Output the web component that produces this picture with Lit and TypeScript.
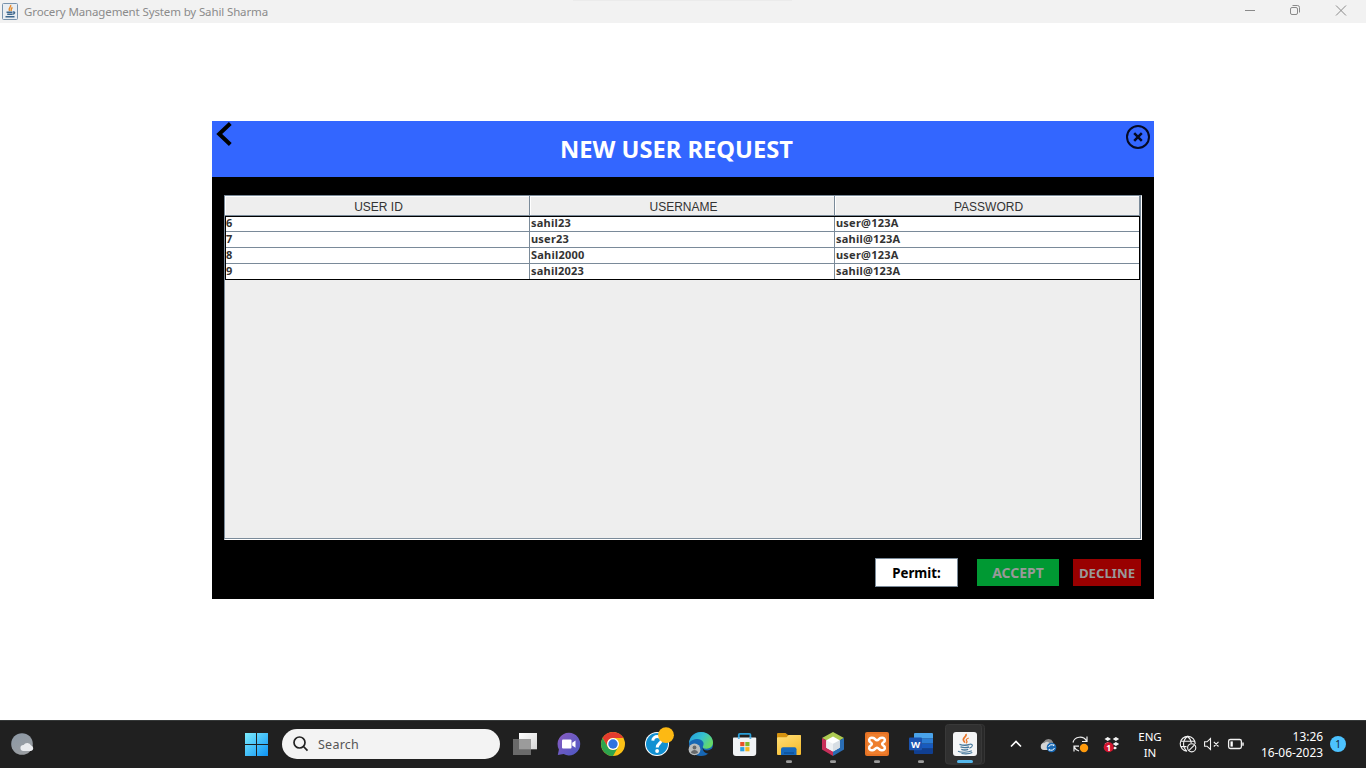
import { LitElement, html, css, svg } from "lit";
import { customElement } from "lit/decorators.js";

const javaCup = svg`
  <path d="M22.800 14c1.800 2.200-4 4-2.200 6.600l1.300 2" fill="none" stroke="#e8762b" stroke-width="1.700"/>
  <path d="M25.800 18c-3.200 1-2.800 2.200-2 3.200.5.8 0 1.500-.8 2" fill="none" stroke="#e8762b" stroke-width="1.300"/>
  <path d="M16.500 24.300c2.800 1 8 .9 10.300.1M17.500 26.900c2.200.8 6.300.8 8.500.1M18.300 29.400c1.800.6 5 .6 6.900 0" fill="none" stroke="#47799c" stroke-width="1.400"/>
  <path d="M26.800 24.200c3.600-.6 3.400 2.800-.3 3.900M15 31.200c2.500 1.400 10.500 1.400 13.800-.4M18.500 33.500c3.500.5 8.500.2 10.800-.9" fill="none" stroke="#47799c" stroke-width="1.100"/>`;

const running = svg`<rect x="19" y="40.300" width="6" height="2.700" rx="1.300" fill="#9c9c9c"/>`;

const apps = [
  svg`<defs><linearGradient id="tv" x2="1" y2="1"><stop stop-color="#fff"/><stop offset="1" stop-color="#d6d6d6"/></linearGradient></defs>
    <rect x="16" y="13" width="18" height="16.300" fill="url(#tv)"/>
    <rect x="10" y="19" width="18" height="16" fill="#6a6a6a"/><rect x="16" y="19" width="12" height="10.300" fill="#9b9b9b"/>`,
  svg`<defs><linearGradient id="ch" x2="1" y2="1"><stop stop-color="#8a5cc0"/><stop offset="1" stop-color="#4b58c4"/></linearGradient></defs>
    <path d="M22 12.800a11.300 11.300 0 1 1-5.300 21.300L10.800 35l1.100-5.500A11.300 11.300 0 0 1 22 12.800z" fill="url(#ch)"/>
    <rect x="15" y="19.500" width="9.500" height="9" rx="1" fill="#fff"/><path d="M25.200 22.700l3.300-2.300v7.300l-3.300-2.300z" fill="#fff"/>`,
  svg`<circle cx="22" cy="24" r="12" fill="#fbc116"/>
    <path d="M11.610 18A12 12 0 0 1 32.390 18H22a6 6 0 0 0-5.200 9z" fill="#e33b2e"/>
    <path d="M11.610 18A12 12 0 0 0 22 36l5.200-9a6 6 0 0 1-10.400 0z" fill="#2da44e"/>
    <circle cx="22" cy="24" r="6" fill="#fff"/><circle cx="22" cy="24" r="4.700" fill="#2f73e0"/>`,
  svg`<circle cx="22" cy="24" r="12" fill="#fff"/><circle cx="22" cy="24" r="11" fill="#1190d2"/>
    <path d="M17.800 20.600c.2-5.400 8.800-5.100 8.600-.4-.1 3.300-4.100 3.300-4.200 7.300" fill="none" stroke="#fff" stroke-width="3"/><circle cx="22.100" cy="31" r="1.900" fill="#fff"/>
    <circle cx="31" cy="15.200" r="7.900" fill="#fdb913"/>`,
  svg`<defs><linearGradient id="e1" x2="1" y2=".5"><stop stop-color="#2398dc"/><stop offset=".55" stop-color="#35c1d0"/><stop offset="1" stop-color="#66d867"/></linearGradient></defs>
    <circle cx="22" cy="24" r="12" fill="#1767b5"/>
    <path d="M10 23.500C10.500 16 16 12 22 12c7.500 0 12 5.500 12 10.500 0 4.200-3 6.200-6.500 6.200-3.200 0-4.200-1.400-3.600-2.300 2.200-3.500-.7-7.400-5.300-7.400-4 0-7.400 1.700-8.600 4.500z" fill="url(#e1)"/>
    <path d="M23.800 26.500c-.5 3.300 3.200 4.600 6.600 3.500l3.600-2V36h-4.500l1.500-2.500c-4 1-8.400-2.500-7.200-7z" fill="#202020"/>
    <circle cx="15.500" cy="29.400" r="5.900" fill="#b9bcbd"/><circle cx="15.500" cy="27.500" r="1.900" fill="#66686a"/><path d="M12 32.800c.3-3.600 6.700-3.600 7 0-1.800 1.500-5.200 1.500-7 0z" fill="#66686a"/>`,
  svg`<path d="M15.800 20v-5.200q0-1 1-1h9.600q1 0 1 1V20" fill="none" stroke="#2a9ed8" stroke-width="1.800"/>
    <path d="M10.800 17.600h21.600q.8 0 .8.800V33q0 3-3 3H13q-3 0-3-3V18.400q0-.8.800-.8z" fill="#f1f3f5"/>
    <path d="M15.800 17.600v1.200M27.400 17.600v1.200" stroke="#2a9ed8" stroke-width="1.800"/>
    <path d="M17.200 22h4.200v4.200h-4.200z" fill="#e8502a"/><path d="M22.300 22h4.200v4.200h-4.200z" fill="#7fb62b"/><path d="M17.200 27.100h4.200v4.200h-4.200z" fill="#2a9fe0"/><path d="M22.300 27.100h4.200v4.200h-4.200z" fill="#f6b61c"/>`,
  svg`<defs><linearGradient id="fo" x2=".6" y2="1"><stop stop-color="#ffdf78"/><stop offset="1" stop-color="#f6bd32"/></linearGradient></defs>
    <path d="M10 18v-4q0-1 1-1h7.500l2.500 2h12q1 0 1 1v3z" fill="#d5920f"/>
    <path d="M11 17.300h8.500l2.200-2.300H33q1 0 1 1V34q0 1-1 1H11q-1 0-1-1V18.300q0-1 1-1z" fill="url(#fo)"/>
    <path d="M14 35v-5.700q0-2 2-2h11.500q2 0 2 2V35z" fill="#1669bd"/><path d="M17 33h10" stroke="#0d4c94" stroke-width="1.300"/>${running}`,
  svg`<path d="M22 12l11 6-11 6-11-6z" fill="#aecb52"/><path d="M11 18l11 6v12l-11-6.500z" fill="#c72f5a"/><path d="M33 18l-11 6v12l11-6.500z" fill="#2a6db4"/>
    <path d="M22 16.500l6.700 3.700v7.500L22 31.500l-6.700-3.800v-7.500z" fill="#fff"/><path d="M22 23.800l6.700-3.600v7.500L22 31.500z" fill="#d8dee4"/><path d="M22 23.800v7.700l-6.700-3.800v-7.500z" fill="#edf0f3"/>${running}`,
  svg`<rect x="10" y="12" width="24" height="24" rx="2" fill="#e77325"/><rect x="12" y="14" width="20" height="20" rx="1.500" fill="#ee7f2e"/>
    <path d="M18.500 18C15 17 13.700 19 14.300 21c.5 1.500 2.600 1.700 2.600 3s-2.100 1.500-2.600 3c-.6 2 .7 4 4.200 3 1.400-.4 1.900-2.300 3.500-2.300s2.100 1.900 3.500 2.300c3.500 1 4.800-1 4.200-3-.5-1.500-2.600-1.700-2.600-3s2.100-1.500 2.600-3c.6-2-.7-4-4.200-3-1.400.4-1.900 2.300-3.500 2.300S19.900 18.400 18.500 18z" fill="none" stroke="#fff" stroke-width="2.500" stroke-linejoin="round"/>${running}`,
  svg`<path d="M15 18v-4q0-1 1-1h17q1 0 1 1v4.500H15z" fill="#4aa3ea"/><path d="M15 18.300h19v5.400H15z" fill="#2b7cd3"/><path d="M15 23.700h19v5H15z" fill="#185abd"/><path d="M15 28.700h19V33q0 1-1 1H16q-1 0-1-1z" fill="#103f91"/>
    <rect x="10" y="17.500" width="13" height="12.800" rx="1" fill="#1a53b0"/><text x="16.500" y="27.700" text-anchor="middle" font-family="Noto Sans, sans-serif" font-weight="700" font-size="9.500" fill="#fff">W</text>${running}`,
  svg`<rect x="5" y="4.500" width="36.500" height="39.500" rx="3" fill="#292929" stroke="#353535"/><rect x="2.500" y="4.500" width="36" height="39.500" rx="3" fill="#303030" stroke="#393939"/>
    <rect x="10" y="12" width="24" height="24" rx="3" fill="#f4f5f6"/>${javaCup}<rect x="14" y="40" width="16" height="3" rx="1.500" fill="#55b7ea"/>`,
];

const rows = [
  ["6", "sahil23", "user@123A"],
  ["7", "user23", "sahil@123A"],
  ["8", "Sahil2000", "user@123A"],
  ["9", "sahil2023", "sahil@123A"],
];

@customElement("app-root")
export class AppRoot extends LitElement {
  static styles = css`
    :host { display: flex; flex-direction: column; width: 1366px; height: 768px; overflow: hidden; background: #fff; font-family: "Noto Sans", "Open Sans", sans-serif; }
    * { box-sizing: border-box; }
    svg { display: block; flex: none; }
    .titlebar { height: 23px; flex: none; display: flex; align-items: center; justify-content: space-between; background: linear-gradient(#ebebeb, #ebebeb) 573px 0 / 219px 1px no-repeat #f2f2f2; padding-left: 2px; color: #8b8b8b; font-size: 11.500px; white-space: nowrap; }
    .brand { display: flex; align-items: center; gap: 6px; }
    .title { line-height: 22px; letter-spacing: -0.130px; }
    .desk { flex: 1; display: flex; justify-content: center; align-items: flex-start; padding-top: 98px; }
    .panel { width: 942px; height: 478px; background: #000; display: flex; flex-direction: column; }
    .head { height: 56px; background: #3366ff; display: grid; grid-template-columns: 28px 1fr 28px; align-items: start; }
    .heading { margin: 0; color: #fff; font-size: 23.700px; line-height: 56px; font-weight: 700; text-align: center; padding-right: 13px; }
    .table { height: 345px; margin: 18px 12px 0; background: #eee; border: 1px solid #7a8a99; border-right-color: #fff; border-bottom-color: #fff; }
    .inner { height: 343px; border-right: 1px solid #7a8a99; border-bottom: 1px solid #7a8a99; }
    .thead, .row { display: grid; grid-template-columns: 305px 305px 305px; }
    .th { height: 20px; font: 12px/22px "Liberation Sans", Arial, sans-serif; color: #333; text-align: center; border-right: 1px solid #7a8a99; border-bottom: 1px solid #7a8a99; box-shadow: inset 1px 1px #fff; padding-left: 3px; }
    .body { width: 915px; border: 1px solid #000; background: #fff; }
    .row { grid-template-columns: 304px 305px 304px; height: 16px; border-bottom: 1px solid #7a8a99; }
    .row:first-child { height: 15px; }
    .row:last-child { height: 15px; border-bottom: 0; }
    .td { font-size: 11px; letter-spacing: 0.220px; font-weight: 700; line-height: 14px; color: #333; padding-left: 1px; border-right: 1px solid #7a8a99; white-space: nowrap; }
    .td:first-child { padding-left: 0; }
    .td:last-child { border-right: 0; }
    .row:first-child .td { line-height: 12px; }
    .actions { display: flex; justify-content: flex-end; padding: 18px 13px 0 0; height: 47px; font-size: 13.300px; font-weight: 700; line-height: 27px; text-align: center; }
    .permit { width: 83px; height: 29px; background: #fff; border: 1px solid #7a8a99; color: #000; margin-right: 19px; line-height: 28px; }
    .accept { width: 82px; height: 27px; margin: 1px 14px 0 0; background: #009933; color: #999; line-height: 28px; font-size: 14px; }
    .decline { width: 68px; height: 27px; margin-top: 1px; background: #990000; color: #999; line-height: 28px; font-size: 13.200px; }
    .taskbar { height: 48px; flex: none; background: #202020; display: flex; box-shadow: inset 0 1px #353838; color: #fff; }
    .start { margin-left: 198px; }
    .search { margin: 9px 3px 0 4px; width: 218px; height: 30px; border-radius: 15px; background: #f3f3f3; display: flex; align-items: center; gap: 8px; padding-left: 10px; color: #555; font-size: 12.500px; letter-spacing: 0.250px; }
    .apps { display: flex; }
    .tray { display: flex; margin-left: 13px; }
    .lang { width: 44px; text-align: center; font-size: 11.500px; line-height: 16px; padding-top: 9px; }
    .clock { width: 75px; text-align: right; font-size: 11.900px; line-height: 16px; padding-top: 8px; white-space: nowrap; }
    .note { width: 16px; height: 16px; border-radius: 50%; margin: 16px 0 0 7px; background: #4cc2ff; color: #123; font-size: 10px; line-height: 16px; text-align: center; }
  `;

  render() {
    return html`
      <div class="titlebar">
        <div class="brand">
          <svg width="16" height="17" viewBox="0 0 16 17"><rect x=".5" y=".5" width="15" height="16" rx="1" fill="#e9eef3" stroke="#7893ad"/>
            <path d="M8.500 2c1.500 2-3 3-1 6M10.500 4.500c-2 1-1 2-1.500 3.500" fill="none" stroke="#e58b2d" stroke-width="1.500"/><path d="M4.500 9.200h6M5.200 11.300h5M3.500 13.700h9M11 9c2.500-.3 2 2-.5 2.300" fill="none" stroke="#3d678d" stroke-width="1.400"/></svg>
          <span class="title">Grocery Management System by Sahil Sharma</span>
        </div>
        <svg width="138" height="23" viewBox="0 0 138 23" fill="none" stroke="#8a8a8a">
          <path d="M17 10.500h10"/><rect x="62.500" y="7.500" width="7" height="7" rx="1.500"/><path d="M64.500 5.500h5q2 0 2 2v5"/><path d="M108 5.500l10 10M118 5.500l-10 10"/>
        </svg>
      </div>
      <main class="desk">
        <section class="panel">
          <header class="head">
            <svg width="28" height="32" viewBox="0 0 28 32"><path d="M18.300 2.500L7.200 13l11.100 10.500" fill="none" stroke="#000" stroke-width="4"/></svg>
            <h1 class="heading">NEW USER REQUEST</h1>
            <svg width="28" height="32" viewBox="0 0 28 32" fill="none" stroke="#050a24" stroke-width="2"><circle cx="12" cy="16" r="11"/><path d="M8.200 12.200l7.600 7.600M15.800 12.200l-7.600 7.600" stroke-width="2.500"/></svg>
          </header>
          <div class="table"><div class="inner">
            <div class="thead">${["USER ID", "USERNAME", "PASSWORD"].map((t) => html`<div class="th">${t}</div>`)}</div>
            <div class="body">${rows.map((r) => html`<div class="row">${r.map((c) => html`<div class="td">${c}</div>`)}</div>`)}</div>
          </div></div>
          <div class="actions"><div class="permit">Permit:</div><div class="accept">ACCEPT</div><div class="decline">DECLINE</div></div>
        </section>
      </main>
      <footer class="taskbar">
        <svg width="44" height="48" viewBox="0 0 44 48"><defs><linearGradient id="mo" x2=".5" y2="1"><stop stop-color="#8b98a5"/><stop offset="1" stop-color="#9a9ea2"/></linearGradient></defs>
          <circle cx="22" cy="24" r="10.800" fill="url(#mo)"/><path d="M23.300 31a3 3 0 0 1 .3-6 4.200 4.200 0 0 1 7.500.4 2.900 2.900 0 0 1 0 5.600z" fill="#e9ebee"/></svg>
        <svg class="start" width="36" height="48" viewBox="0 0 36 48"><defs><linearGradient id="w" gradientUnits="userSpaceOnUse" x1="3" y1="13" x2="26" y2="36"><stop stop-color="#7cecfd"/><stop offset="1" stop-color="#0d93f5"/></linearGradient></defs>
          <path d="M3 13h11v11H3zM15 13h11v11H15zM3 25h11v11H3zM15 25h11v11H15z" fill="url(#w)"/></svg>
        <div class="search"><svg width="18" height="18" viewBox="0 0 18 18" fill="none" stroke="#222" stroke-width="1.700"><circle cx="7.500" cy="7.500" r="5.500"/><path d="M11.500 11.500l4 4.200"/></svg><span>Search</span></div>
        <div class="apps">${apps.map((a) => html`<svg width="44" height="48" viewBox="0 0 44 48">${a}</svg>`)}</div>
        <div class="tray">
          <svg width="128" height="48" viewBox="1000 0 128 48">
            <path d="M1011 26.500l5-5 5 5" fill="none" stroke="#fff" stroke-width="1.600"/>
            <path d="M1045 29a4 4 0 0 1-1-7.500 5 5 0 0 1 9 .5l1 6z" fill="#8c8c8c"/><path d="M1044 30a3.500 3.500 0 0 1 .5-7q3-2.800 5.500.5l3 5v1.500z" fill="#d3d3d3"/>
            <circle cx="1051.500" cy="27.500" r="4.800" fill="#1767b2"/><path d="M1048.600 27a3 3 0 0 1 5.200-1.200v-1.600M1054.400 28a3 3 0 0 1-5.200 1.200v1.600" fill="none" stroke="#fff"/>
            <path d="M1073 22.500c1.500-6.500 10.500-7 13.500-1.500M1087 16.500v5h-5M1074 31.500v-5.300h5M1074 26.500c1 2.500 2.500 3.700 5 4.500" fill="none" stroke="#eee" stroke-width="1.200"/><circle cx="1084" cy="28" r="4.200" fill="#ff9a0c"/>
            <path d="M1104.500 19l3.200-2 3.300 2-3.300 2zM1112.700 19l3.200-2 3.300 2-3.300 2zM1112.700 24l3.200-2 3.300 2-3.300 2zM1104.500 24l3.200-2 3.300 2-3.300 2zM1112.500 28l2.500-1.500 2 1.500-2 1.500z" fill="#f4f4f4"/>
            <circle cx="1108.700" cy="27.300" r="5" fill="#d3152f"/><text x="1108.700" y="30.500" text-anchor="middle" font-family="Noto Sans, sans-serif" font-weight="700" font-size="8.500" fill="#fff">1</text>
          </svg>
          <div class="lang">ENG<br />IN</div>
          <svg width="76" height="48" viewBox="1172 0 76 48" fill="none" stroke="#f2f2f2" stroke-width="1.100">
            <path d="M1187 31.300a7.500 7.500 0 1 1 8.200-7.300M1187 31.300c-4.700-4-4.700-11.200 0.600-14.800 2.300 1.700 3.400 4 3.600 6.500M1181 21.300h13.200M1181 26.600h5.500"/><circle cx="1191.700" cy="27.800" r="4.100"/><path d="M1188.800 30.700l5.800-5.800"/>
            <path d="M1204.600 21.800h2.400l3.500-3.300v11l-3.500-3.300h-2.400zM1213.800 21.800l4.700 4.700M1218.500 21.800l-4.700 4.700"/>
            <rect x="1228.600" y="19.500" width="12.800" height="9" rx="1.800" stroke-width="1.300"/><path d="M1230.500 21.400h2.300v5.200h-2.300z" fill="#fff" stroke="none"/><path d="M1243 22.500v3.200" stroke-width="1.500"/>
          </svg>
          <div class="clock">13:26<br />16-06-2023</div>
          <div class="note">1</div>
        </div>
      </footer>`;
  }
}
